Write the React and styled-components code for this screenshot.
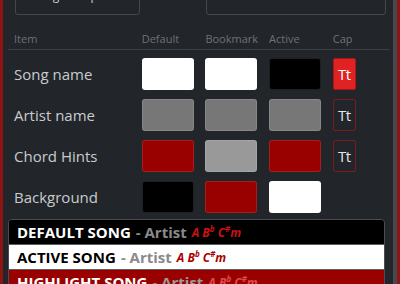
import React from "react";
import styled, { createGlobalStyle } from "styled-components";

const Global = createGlobalStyle`
  html, body { margin: 0; padding: 0; background: #222529; }
  body { font-family: "Open Sans", "Noto Sans", sans-serif; overflow: hidden; }
`;

const Frame = styled.div`
  width: 400px;
  height: 284px;
  box-sizing: border-box;
  display: flex;
  overflow: hidden;
  background: #222529;
  border-left: 3px solid #8e1414;
  border-right: 3px solid #8e1414;
`;

const Content = styled.div`
  flex: 1;
  padding: 0 3px 0 5px;
  min-width: 0;
`;

const Scrollbar = styled.div`
  width: 4px;
  background: #45484d;
`;

const Toolbar = styled.div`
  display: flex;
  margin-top: -27px;
  height: 42px;
  padding-left: 7px;
  gap: 66px;
`;

const ToolButton = styled.div`
  box-sizing: border-box;
  width: ${(p) => p.w}px;
  height: 42px;
  border: 1px solid #44484d;
  border-radius: 3px;
  display: flex;
  align-items: center;
  justify-content: center;
  color: #c8ccd0;
  font-size: 12px;
  line-height: 12px;
  padding: 4px ${(p) => p.pr || 0}px 0 0;
`;

const Grid = styled.div`
  display: grid;
  grid-template-columns: 116px 52px 52px 52px 23px;
  column-gap: 11.7px;
  padding-left: 6px;
`;

const HeaderRow = styled(Grid)`
  margin-top: 16px;
  padding-bottom: 3px;
  border-bottom: 1px solid #3b3f45;
`;

const HeadCell = styled.div`
  color: #6d7279;
  font-size: 11px;
  line-height: 15px;
`;

const Rows = styled.div`
  display: flex;
  flex-direction: column;
  gap: 9px;
  margin-top: 8px;
`;

const Row = styled(Grid)`
  height: 32px;
  align-items: center;
`;

const Label = styled.div`
  color: #c8ccd0;
  font-size: 15px;
  line-height: 20px;
`;

const Swatch = styled.div`
  box-sizing: border-box;
  height: 32px;
  border-radius: 3px;
  background: ${(p) => p.c};
  border: 1px solid rgba(255, 255, 255, 0.12);
`;

const Cap = styled.div`
  box-sizing: border-box;
  height: 32px;
  border-radius: 2px;
  border: 1px solid ${(p) => (p.on ? "#a81818" : "#7d1a1a")};
  background: ${(p) => (p.on ? "#e02222" : "transparent")};
  color: ${(p) => (p.on ? "#ffffff" : "#e4e6e8")};
  font-size: 15px;
  display: flex;
  align-items: center;
  justify-content: center;
  letter-spacing: -0.5px;
`;

const Preview = styled.div`
  margin: 6px 5px 0 0;
  border: 1px solid #4a4e54;
  border-radius: 4px 4px 0 0;
  overflow: hidden;
`;

const PRow = styled.div`
  height: 24px;
  display: flex;
  align-items: center;
  padding-left: 8px;
  background: ${(p) => p.bg};
  white-space: nowrap;
  border-top: ${(p) => (p.first ? "none" : "1px solid #5a5e63")};
`;

const Title = styled.span`
  font-weight: 700;
  font-size: 15px;
  color: ${(p) => p.c};
`;

const Artist = styled.span`
  font-weight: 700;
  font-size: 15px;
  color: ${(p) => p.c};
  margin-left: 5px;
`;

const Chords = styled.span`
  font-weight: 700;
  font-style: italic;
  font-size: 12px;
  color: ${(p) => p.c};
  margin-left: 5px;
  sup { font-size: 8px; vertical-align: 5px; line-height: 0; }
`;

const chordsText = (
  <>
    A B<sup>b</sup> C<sup>#</sup>m
  </>
);

const rows = [
  { label: "Song name", c: ["#ffffff", "#ffffff", "#000000"], cap: true },
  { label: "Artist name", c: ["#777777", "#777777", "#777777"], cap: false },
  { label: "Chord Hints", c: ["#990000", "#999999", "#990000"], cap: false },
  { label: "Background", c: ["#000000", "#990000", "#ffffff"], cap: null },
];

export default function App() {
  return (
    <>
      <Global />
      <Frame>
        <Content>
          <Toolbar>
            <ToolButton w={125} pr={20}>Song Groups</ToolButton>
            <ToolButton w={180}>Restore Defaults</ToolButton>
          </Toolbar>
          <HeaderRow>
            <HeadCell>Item</HeadCell>
            <HeadCell>Default</HeadCell>
            <HeadCell>Bookmark</HeadCell>
            <HeadCell>Active</HeadCell>
            <HeadCell>Cap</HeadCell>
          </HeaderRow>
          <Rows>
            {rows.map((r) => (
              <Row key={r.label}>
                <Label>{r.label}</Label>
                {r.c.map((c, i) => (
                  <Swatch key={i} c={c} />
                ))}
                {r.cap === null ? <div /> : <Cap on={r.cap}>Tt</Cap>}
              </Row>
            ))}
          </Rows>
          <Preview>
            <PRow bg="#000000" first>
              <Title c="#ffffff">DEFAULT SONG</Title>
              <Artist c="#8a8a8a">- Artist</Artist>
              <Chords c="#cc1111">{chordsText}</Chords>
            </PRow>
            <PRow bg="#ffffff">
              <Title c="#000000">ACTIVE SONG</Title>
              <Artist c="#8a8a8a">- Artist</Artist>
              <Chords c="#aa0000">{chordsText}</Chords>
            </PRow>
            <PRow bg="#990000">
              <Title c="#ffffff">HIGHLIGHT SONG</Title>
              <Artist c="#9a9a9a">- Artist</Artist>
              <Chords c="#e24a4a">{chordsText}</Chords>
            </PRow>
          </Preview>
        </Content>
        <Scrollbar />
      </Frame>
    </>
  );
}
